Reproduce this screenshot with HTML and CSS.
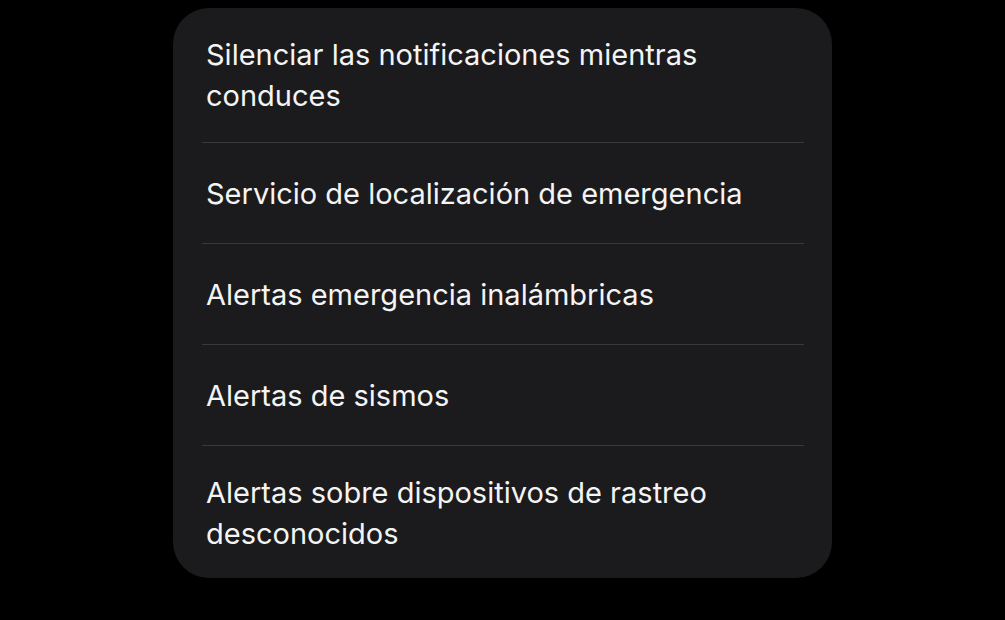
FILE: index.html
```html
<!DOCTYPE html>
<html lang="es">
<head>
<meta charset="utf-8">
<link rel="stylesheet" href="styles.css">
</head>
<body>
<div class="card">
  <div class="item two"><span class="label">Silenciar las notificaciones mientras conduces</span></div>
  <div class="item"><span class="label">Servicio de localización de emergencia</span></div>
  <div class="item"><span class="label">Alertas emergencia inalámbricas</span></div>
  <div class="item"><span class="label">Alertas de sismos</span></div>
  <div class="item two"><span class="label">Alertas sobre dispositivos de rastreo desconocidos</span></div>
</div>
</body>
</html>
```
FILE: styles.css
```css
html, body {
  margin: 0;
  padding: 0;
  background: #000;
}
body {
  width: 1005px;
  height: 620px;
  overflow: hidden;
  font-family: Inter, "Noto Sans", sans-serif;
}
.card {
  margin: 8px 0 0 173px;
  width: 659px;
  height: 570px;
  box-sizing: border-box;
  background: #1b1b1d;
  border-radius: 36px;
  padding: 0 28px 0 29px;
  display: flex;
  flex-direction: column;
}
.item {
  display: flex;
  align-items: center;
  height: 101px;
  flex: none;
  padding: 0 0 0 4px;
  border-bottom: 1px solid #38383a;
  box-sizing: border-box;
}
.item.two {
  height: 135px;
  padding-right: 80px;
}
.item:last-child {
  border-bottom: none;
  height: 133px;
}
.label {
  color: #f4f4f4;
  font-size: 29px;
  line-height: 41px;
}
```
